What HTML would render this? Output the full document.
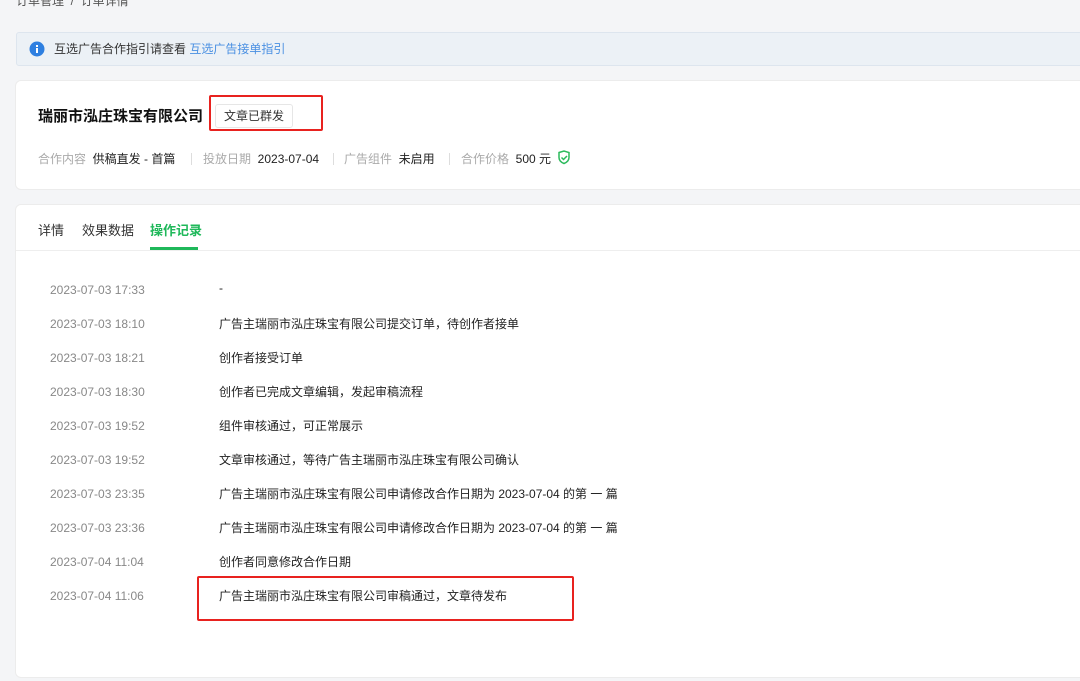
<!DOCTYPE html>
<html><head><meta charset="utf-8"><style>
*{margin:0;padding:0;box-sizing:border-box}
body{width:1080px;height:681px;overflow:hidden;background:#f4f5f7;font-family:"Liberation Sans","Noto Sans CJK SC",sans-serif;position:relative;color:#222}
.a{position:absolute;white-space:nowrap}
.bc{left:16px;top:-8px;font-size:12px;color:#555}
.info{left:16px;top:32px;width:1080px;height:34px;background:#ecf1f6;border:1px solid #dde5ee;border-radius:3px}
.card{background:#fff;border-radius:6px;border:1px solid #ececec}
.meta{font-size:12px;top:150px}
.g{color:#aaa}
.sep{width:1px;height:12px;background:#ddd;top:153px}
.t{font-size:12px;color:#888;left:50px}
.x{font-size:12px;color:#222;left:219px;margin-top:-2px}
.red{border:2px solid #e8221f;border-radius:2px}
</style></head><body>
<div class="a bc">订单管理 &nbsp;/ &nbsp;订单详情</div>
<div class="a info"></div>
<svg class="a" style="left:29px;top:41px" width="16" height="16"><circle cx="8" cy="8" r="7.5" fill="#2e7fe0"/><rect x="7" y="7" width="2" height="5" fill="#fff"/><rect x="7" y="4" width="2" height="2" fill="#fff"/></svg>
<div class="a" style="left:54px;top:40px;font-size:12px;color:#333">互选广告合作指引请查看 <span style="color:#4a90e2">互选广告接单指引</span></div>
<div class="a card" style="left:15px;top:80px;width:1080px;height:110px"></div>
<div class="a" style="left:38px;top:105px;font-size:15px;font-weight:bold;color:#111">瑞丽市泓庄珠宝有限公司</div>
<div class="a" style="left:215px;top:104px;width:78px;height:24px;border:1px solid #e6e6e6;border-radius:3px;font-size:12px;line-height:22px;text-align:center;color:#333">文章已群发</div>
<div class="a red" style="left:209px;top:95px;width:114px;height:36px"></div>
<div class="a meta" style="left:38px"><span class="g">合作内容</span>&nbsp; 供稿直发 - 首篇</div>
<div class="a sep" style="left:191px"></div>
<div class="a meta" style="left:203px"><span class="g">投放日期</span>&nbsp; 2023-07-04</div>
<div class="a sep" style="left:333px"></div>
<div class="a meta" style="left:344px"><span class="g">广告组件</span>&nbsp; 未启用</div>
<div class="a sep" style="left:449px"></div>
<div class="a meta" style="left:461px"><span class="g">合作价格</span>&nbsp; 500 元</div>
<svg class="a" style="left:557px;top:150px" width="14" height="15"><path d="M2 2.5L7 1l5 1.5v5c0 3-2.5 5-5 6-2.5-1-5-3-5-6z" fill="none" stroke="#2cba5c" stroke-width="1.5"/><path d="M4.5 7.5l2 2 3.5-3.5" fill="none" stroke="#2cba5c" stroke-width="1.5"/></svg>
<div class="a card" style="left:15px;top:204px;width:1080px;height:474px"></div>
<div class="a" style="left:38px;top:220px;font-size:13px;color:#333">详情</div>
<div class="a" style="left:82px;top:220px;font-size:13px;color:#333">效果数据</div>
<div class="a" style="left:150px;top:220px;font-size:13px;color:#1fb85a;font-weight:bold">操作记录</div>
<div class="a" style="left:150px;top:247px;width:48px;height:3px;background:#1fb85a"></div>
<div class="a" style="left:16px;top:250px;width:1064px;height:1px;background:#eee"></div>
<div class="a t" style="top:283px">2023-07-03 17:33</div><div class="a x" style="top:283px">-</div>
<div class="a t" style="top:317px">2023-07-03 18:10</div><div class="a x" style="top:317px">广告主瑞丽市泓庄珠宝有限公司提交订单，待创作者接单</div>
<div class="a t" style="top:351px">2023-07-03 18:21</div><div class="a x" style="top:351px">创作者接受订单</div>
<div class="a t" style="top:385px">2023-07-03 18:30</div><div class="a x" style="top:385px">创作者已完成文章编辑，发起审稿流程</div>
<div class="a t" style="top:419px">2023-07-03 19:52</div><div class="a x" style="top:419px">组件审核通过，可正常展示</div>
<div class="a t" style="top:453px">2023-07-03 19:52</div><div class="a x" style="top:453px">文章审核通过，等待广告主瑞丽市泓庄珠宝有限公司确认</div>
<div class="a t" style="top:487px">2023-07-03 23:35</div><div class="a x" style="top:487px">广告主瑞丽市泓庄珠宝有限公司申请修改合作日期为 2023-07-04 的第 一 篇</div>
<div class="a t" style="top:521px">2023-07-03 23:36</div><div class="a x" style="top:521px">广告主瑞丽市泓庄珠宝有限公司申请修改合作日期为 2023-07-04 的第 一 篇</div>
<div class="a t" style="top:555px">2023-07-04 11:04</div><div class="a x" style="top:555px">创作者同意修改合作日期</div>
<div class="a t" style="top:589px">2023-07-04 11:06</div><div class="a x" style="top:589px">广告主瑞丽市泓庄珠宝有限公司审稿通过，文章待发布</div>
<div class="a red" style="left:197px;top:576px;width:377px;height:45px"></div>
</body></html>
